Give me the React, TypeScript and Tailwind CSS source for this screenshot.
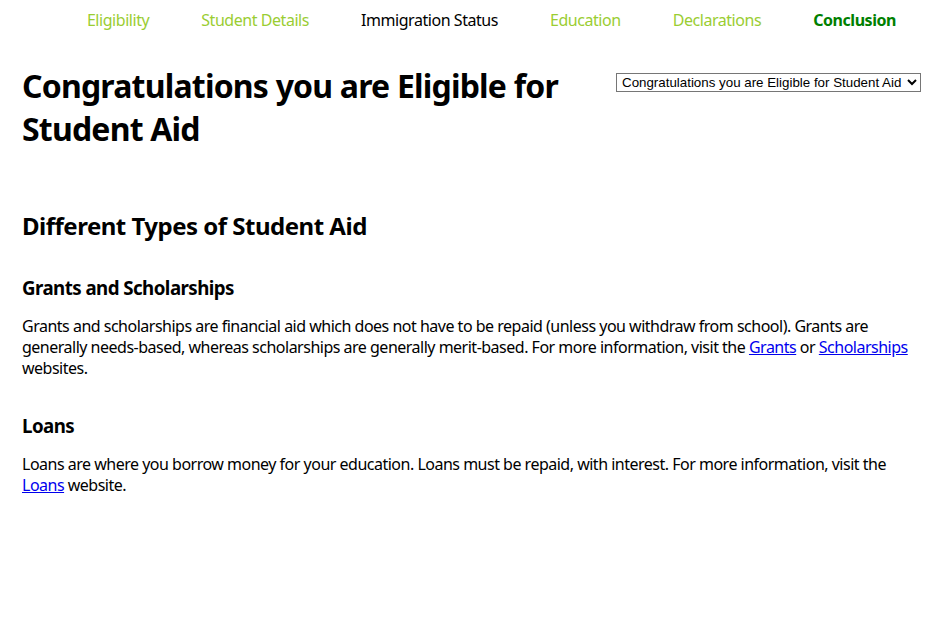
import React from "react";

const navItems = [
  { label: "Eligibility", cls: "text-[#9acd32]" },
  { label: "Student Details", cls: "text-[#9acd32]" },
  { label: "Immigration Status", cls: "text-black" },
  { label: "Education", cls: "text-[#9acd32]" },
  { label: "Declarations", cls: "text-[#9acd32]" },
  { label: "Conclusion", cls: "text-[#008000] font-bold" },
];

export default function App() {
  return (
    <div className="min-h-[626px] bg-white text-black font-['Noto_Sans',_'Open_Sans',_sans-serif]">
      <nav className="h-[40px] flex items-center justify-end pr-[42px] gap-[52px] text-[16px] leading-[21px] tracking-[-0.45px]">
        {navItems.map((n) => (
          <span key={n.label} className={n.cls}>
            {n.label}
          </span>
        ))}
      </nav>
      <div className="px-[22px] pr-[17px]">
        <div className="flex justify-between items-start mt-[24px]">
          <h1 className="text-[32px] leading-[43px] font-bold w-[580px] tracking-[-0.8px]">
            Congratulations you are Eligible for Student Aid
          </h1>
          <select className="mt-[9px] h-[19px] border border-[#767676] bg-white text-[13.33px] font-['Liberation_Sans',_Arial,_sans-serif] text-black px-[1px]">
            <option>Congratulations you are Eligible for Student Aid</option>
          </select>
        </div>
        <h2 className="mt-[60px] text-[24px] leading-[32px] font-bold tracking-[-0.5px]">
          Different Types of Student Aid
        </h2>
        <h3 className="mt-[33px] text-[18.72px] leading-[25px] font-bold tracking-[-0.55px]">
          Grants and Scholarships
        </h3>
        <p className="mt-[16px] text-[16px] leading-[21px] tracking-[-0.5px]">
          Grants and scholarships are financial aid which does not have to be repaid (unless you withdraw from school). Grants are generally needs-based, whereas scholarships are generally merit-based. For more information, visit the{" "}
          <a href="#" className="text-[#0000ee] underline">Grants</a> or{" "}
          <a href="#" className="text-[#0000ee] underline">Scholarships</a> websites.
        </p>
        <h3 className="mt-[34px] text-[18.72px] leading-[25px] font-bold tracking-[-0.55px]">Loans</h3>
        <p className="mt-[16px] text-[16px] leading-[21px] tracking-[-0.5px]">
          Loans are where you borrow money for your education. Loans must be repaid, with interest. For more information, visit the{" "}
          <a href="#" className="text-[#0000ee] underline">Loans</a> website.
        </p>
      </div>
    </div>
  );
}
